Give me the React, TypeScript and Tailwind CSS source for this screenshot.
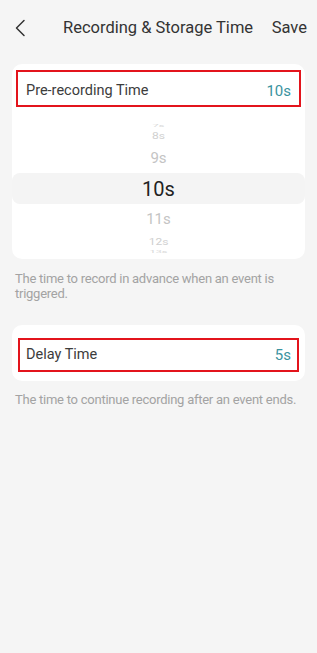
import React from "react";

export default function App() {
  return (
    <div className="w-[317px] h-[653px] bg-[#f5f5f5] overflow-hidden" style={{ fontFamily: "Roboto, 'Noto Sans', sans-serif" }}>
      {/* header */}
      <div className="h-[56px] flex items-center px-[12px]">
        <svg width="14" height="20" viewBox="0 0 14 20" className="ml-[2px] shrink-0">
          <path d="M10 2.5 L2.5 10 L10 17.5" fill="none" stroke="#333" strokeWidth="1.5" strokeLinecap="round" strokeLinejoin="round" />
        </svg>
        <div className="text-[16.5px] font-normal text-[#333] ml-[35px] whitespace-nowrap">Recording &amp; Storage Time</div>
        <div className="flex-1" />
        <div className="text-[16.5px] font-normal text-[#333] mr-[-2px]">Save</div>
      </div>

      {/* card 1 */}
      <div className="mt-[8px] mx-[12px] bg-white rounded-[10px] overflow-hidden">
        <div className="pt-[6px] px-[4px]">
          <div className="h-[37px] border-2 border-[#e3141c] flex items-center justify-between px-[8px] pt-[5px]">
            <span className="text-[14.5px] font-normal text-[#3c3c3c]">Pre-recording Time</span>
            <span className="text-[15px] font-normal text-[#3a93a0]">10s</span>
          </div>
        </div>
        <div className="h-[152px] flex flex-col overflow-hidden">
          <div className="h-[21px] flex items-end justify-center">
            <span className="text-[11px] text-[#d8d8d8] scale-y-[0.35] leading-none origin-bottom">7s</span>
          </div>
          <div className="h-[16px] flex items-center justify-center">
            <span className="text-[12px] text-[#cfcfcf] scale-y-[0.75] leading-none">8s</span>
          </div>
          <div className="h-[29px] flex items-center justify-center">
            <span className="text-[15px] text-[#c4c4c4] leading-none">9s</span>
          </div>
          <div className="h-[31px] bg-[#f4f4f4] rounded-[8px] flex items-center justify-center">
            <span className="text-[20px] font-normal text-[#222] leading-none">10s</span>
          </div>
          <div className="h-[30px] flex items-center justify-center">
            <span className="text-[15px] text-[#c4c4c4] leading-none">11s</span>
          </div>
          <div className="h-[16px] flex items-center justify-center">
            <span className="text-[12px] text-[#cfcfcf] scale-y-[0.75] leading-none">12s</span>
          </div>
          <div className="h-[9px] flex items-start justify-center">
            <span className="text-[11px] text-[#d8d8d8] scale-y-[0.35] leading-none origin-top">13s</span>
          </div>
        </div>
      </div>
      <div className="px-[15px] pt-[12px] text-[13px] leading-[15px] tracking-[-0.25px] text-[#a3a3a3]">
        The time to record in advance when an event is triggered.
      </div>

      {/* card 2 */}
      <div className="mt-[24px] mx-[12px] bg-white rounded-[10px] pt-[13px] pb-[9px] px-[6px]">
        <div className="h-[34px] border-2 border-[#e3141c] flex items-center justify-between px-[6px]">
          <span className="text-[14.5px] font-normal text-[#3c3c3c]">Delay Time</span>
          <span className="text-[15px] font-normal text-[#3a93a0]">5s</span>
        </div>
      </div>
      <div className="px-[15px] pt-[11px] text-[13px] leading-[16px] tracking-[-0.25px] text-[#a3a3a3] whitespace-nowrap">
        The time to continue recording after an event ends.
      </div>
    </div>
  );
}
